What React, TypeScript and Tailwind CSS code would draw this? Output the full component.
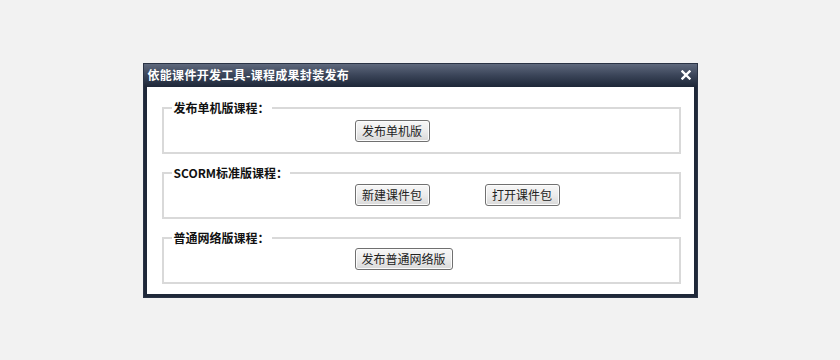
import React from 'react';

function WinButton({ label, className = '' }: { label: string; className?: string }) {
  return (
    <button
      type="button"
      className={`flex h-[22px] items-center justify-center whitespace-nowrap rounded-[3px] border border-[#707070] bg-gradient-to-b from-[#f7f7f7] via-[#ececec] to-[#d9d9d9] px-0 text-[12px] leading-none text-[#222] shadow-[inset_0_0_0_1px_#fcfcfc] ${className}`}
    >
      {label}
    </button>
  );
}

function Group({ title, children }: { title: string; children: React.ReactNode }) {
  return (
    <fieldset className="h-[53px] w-[519px] border-2 border-[#d9d9d9] px-0">
      <legend className="ml-[8px] px-[2px] text-[12px] font-bold leading-[14px] text-[#111]">{title}</legend>
      {children}
    </fieldset>
  );
}

export default function App() {
  return (
    <div className="flex h-[360px] w-full items-center justify-center bg-[#f2f2f2] font-['Noto_Sans_CJK_SC',sans-serif]">
      <div className="flex h-[233px] w-[553px] flex-col bg-[#1f2839] shadow-[0_0_0_1px_#2a3345]">
        <div className="flex h-[23px] items-center justify-between bg-gradient-to-b from-[#5f697d] via-[#3a4458] to-[#1e2738] pl-[4px] pr-[6px]">
          <span className="text-[12px] font-bold leading-none tracking-[0.3px] text-white">依能课件开发工具-课程成果封装发布</span>
          <svg width="10" height="10" viewBox="0 0 10 10">
            <path d="M1.5 1.5 L8.5 8.5 M8.5 1.5 L1.5 8.5" stroke="#fff" strokeWidth="2.4" strokeLinecap="square" />
          </svg>
        </div>
        <div className="mx-[3px] mb-[3px] flex flex-1 flex-col gap-[12px] bg-white pl-[15px] pr-[13px] pt-[14px]">
          <Group title="发布单机版课程：">
            <div className="ml-[191px] mt-[5px] flex">
              <WinButton label="发布单机版" className="w-[75px]" />
            </div>
          </Group>
          <Group title="SCORM标准版课程：">
            <div className="ml-[191px] mt-[4px] flex gap-[55px]">
              <WinButton label="新建课件包" className="w-[75px]" />
              <WinButton label="打开课件包" className="w-[75px]" />
            </div>
          </Group>
          <Group title="普通网络版课程：">
            <div className="ml-[191px] mt-[3px] flex">
              <WinButton label="发布普通网络版" className="w-[98px]" />
            </div>
          </Group>
        </div>
      </div>
    </div>
  );
}
